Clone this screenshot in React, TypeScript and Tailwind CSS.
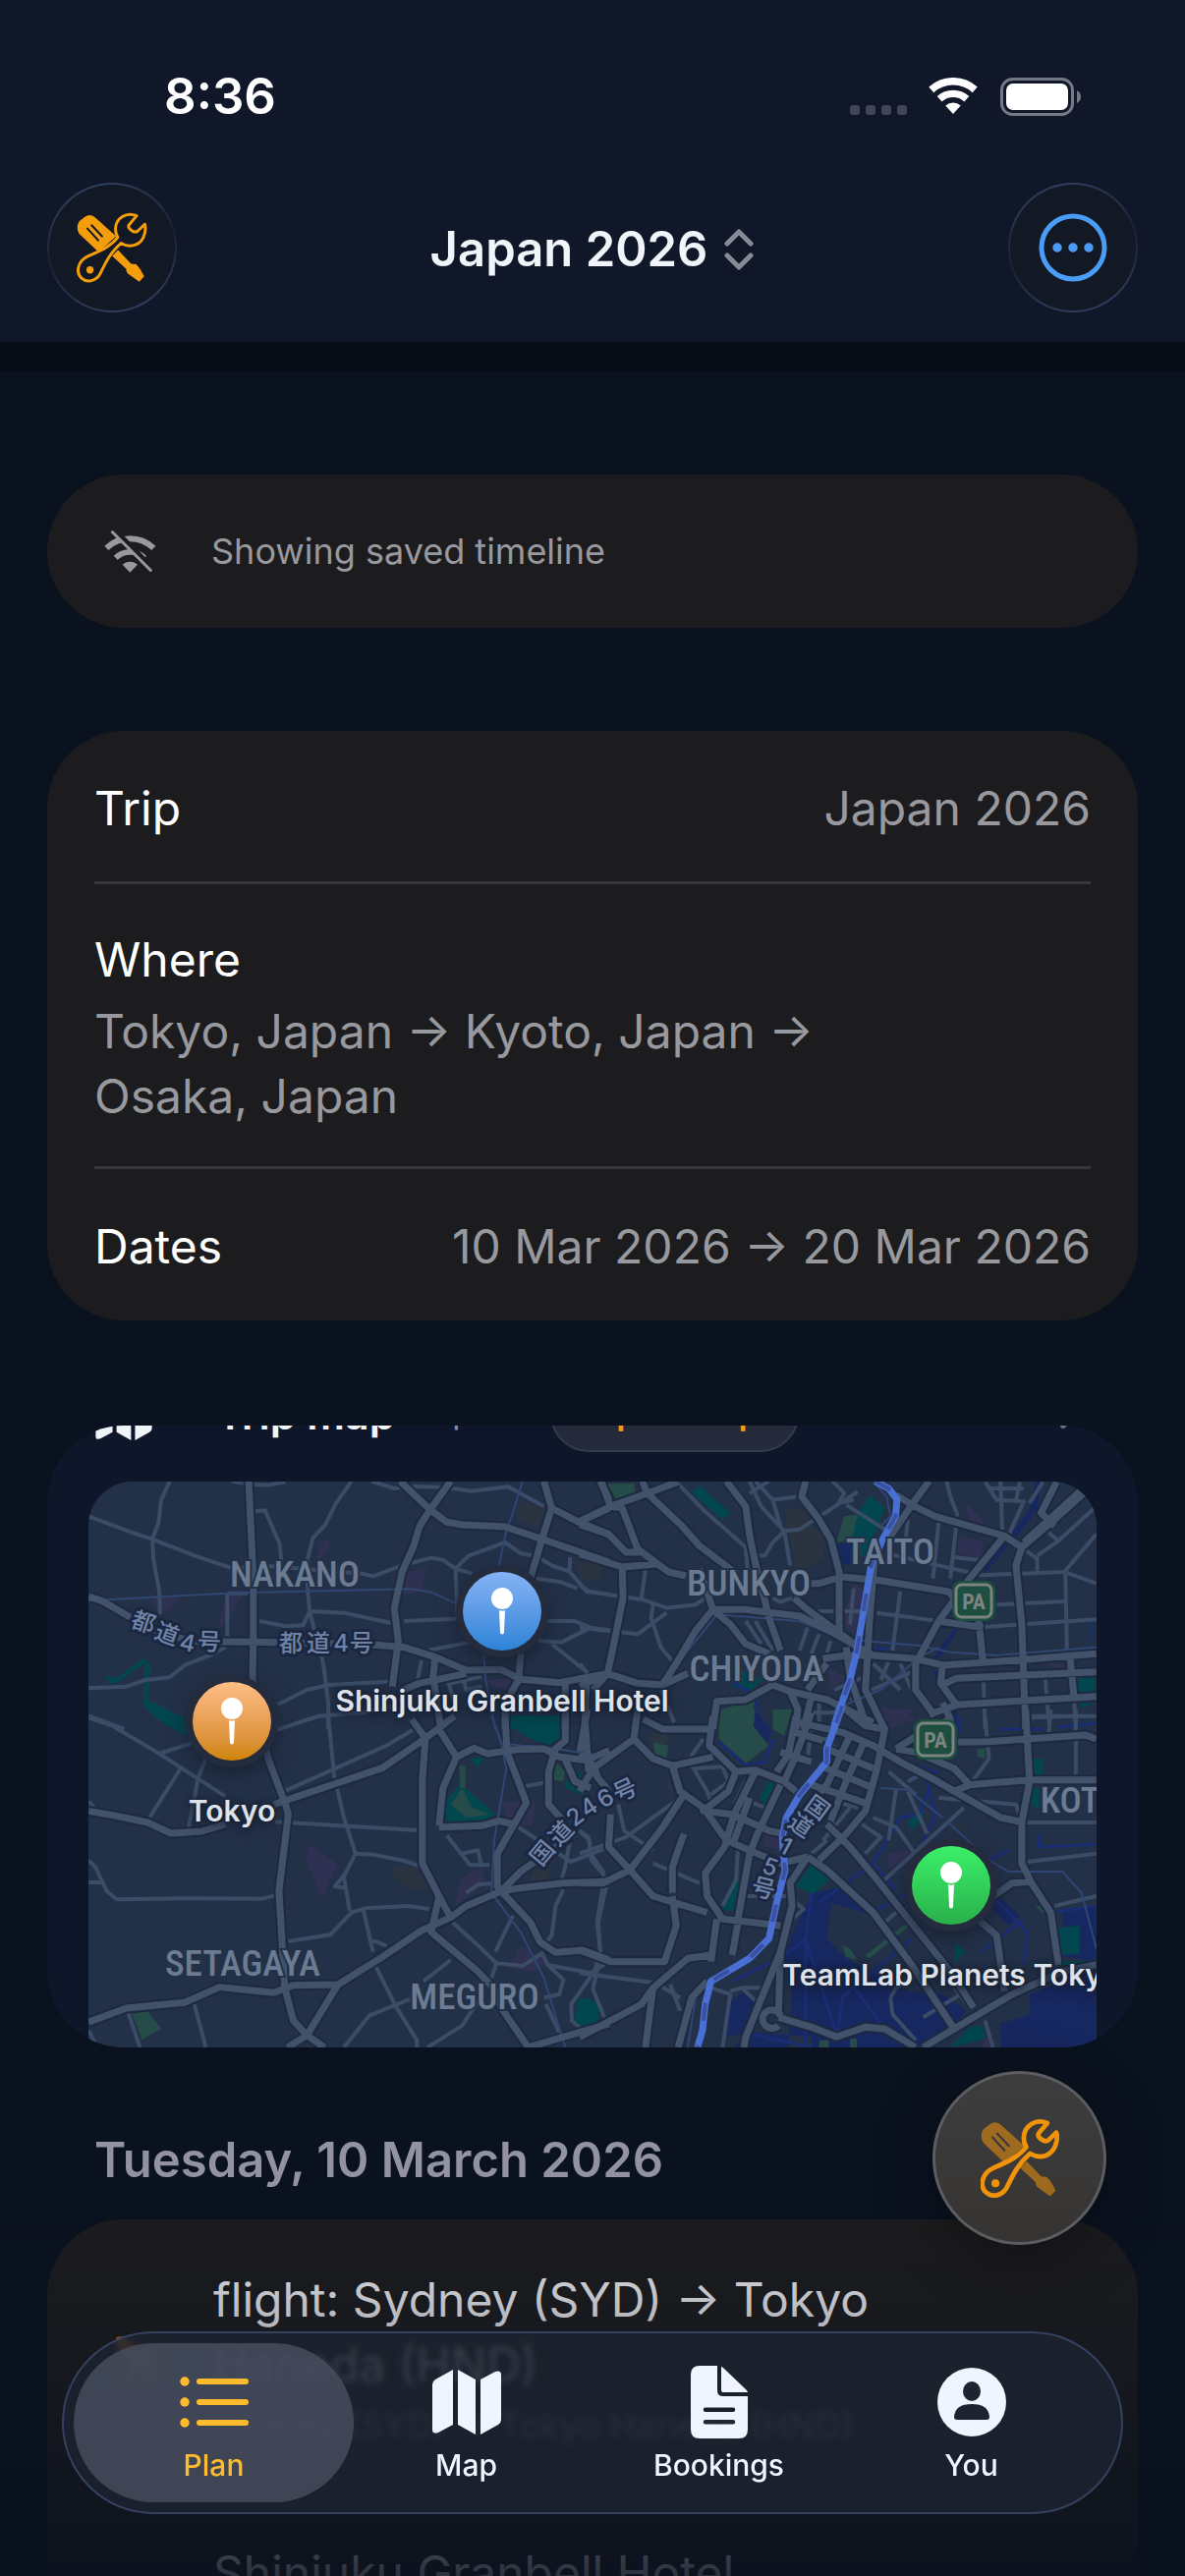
import React from 'react';
import { Plane } from 'lucide-react';

type Tile = {
  origin: string;
  water: string;
  canals: string;
  teal: string;
  green: string;
  purple: string;
  brown: string;
  major: string;
  minor: string;
  rail: string;
  route: string;
};

// Map is split in four tiles, each with its own coordinate space
const tiles: Tile[] = [
  {
    origin: 'translate(-90 -88) scale(0.3954 0.3333)',
    water: '',
    canals: '',
    teal: 'M270 855L300 865L370 803L388 830L380 930L440 965L475 1000V1018L440 1015L400 985L370 950L372 820L300 878L280 880Z M1310 978H1443V1020H1315Z',
    green: 'M435 990L460 990V1015H440Z',
    purple: 'M820 450L850 440L845 470L815 510Z M385 610L460 620L440 650L410 670Z M560 720L580 610L630 600L590 680Z M1010 550L1100 525L1085 600L1040 610Z M1260 870L1340 860L1320 900L1270 890Z',
    brown: 'M1335 320L1415 350L1390 405L1330 380Z M1475 510L1540 510L1550 550L1510 570Z',
    major:
      'M640 263L652 560L652 740L650 870L690 1020 M228 615L262 628L330 675L420 730L500 752L575 753L720 755L960 762L1040 770L1120 800L1200 840L1290 838L1340 868L1440 878L1568 850 M1030 263L1107 350L1150 388L1190 396L1300 402L1395 440L1568 510 M1160 263L1107 350L1080 400L1065 460L1035 540L1015 650L1025 750L1010 890 M1400 263L1420 345L1395 440L1365 560 M1420 345L1490 388L1568 425 M1490 388L1568 345 M1545 263L1568 320 M1120 800L1115 860L1135 1020 M1340 790L1335 870L1300 940L1300 1020 M1455 870V1020 M1510 860L1505 1020 M1040 900L1080 880L1200 850',
    minor:
      'M228 370L340 420L392 440L500 490L600 530L700 523L930 545L960 553L1035 520L1110 497L1140 503L1172 530L1215 545 M1172 530L1205 492L1300 450L1340 483L1380 492L1420 520L1465 538L1510 600L1568 608 M437 263L415 320L408 390L392 440L395 500L410 600L412 670 M595 263L650 273L690 275L735 265 M655 355L682 352L720 455L724 510 M905 263L865 330L838 395L805 437L792 500V600L797 660L780 703L735 706L668 690 M797 660L885 665L1010 697 M797 660L832 820L845 940V1020 M955 263L1015 285L1050 278L1150 282L1212 293L1308 280L1400 340 M1040 690L1175 683 M1400 690L1478 690L1520 710L1568 718 M1520 710L1445 755L1385 750 M1420 760L1515 850 M1172 530L1178 680 M585 605V740 M585 605H650 M228 895L325 890L375 870L437 862L475 825L540 795L580 770 M715 945L790 900L845 885L1000 875 M720 1020L820 980L930 970L1010 950 M228 980L320 1020 M1100 780L1210 755 M1085 810L1075 870 M1380 560L1440 570L1485 590 M1468 495L1465 538 M1150 860L1170 940 M1190 855L1200 900L1240 890 M1160 880L1240 860',
    rail: 'M228 628L585 605L1060 592L1110 602L1172 635 M1345 263L1325 340L1300 430L1285 520 M1245 790L1250 870L1275 1020',
    route: '',
  },
  {
    origin: 'translate(500 -88) scale(0.3929 0.3333)',
    water:
      'M1180 263H1198L1185 350L1130 435L1120 420L1165 350Z M1100 450L1110 460L1050 545L1042 535Z M670 455L705 450L700 520L675 515Z M970 710L985 705L935 800L915 805Z M915 840L930 850L925 885Z M935 900L970 940L990 1020H975L965 960Z',
    canals: 'M455 930L470 1020 M385 870L440 905 M1325 690V750 M760 775H800',
    teal: 'M310 275L390 360L370 380L290 300Z M752 305L790 345L745 490L720 490L700 400Z M395 830L475 870L440 905L395 890Z M1290 860H1335V905H1290Z M1295 940H1335L1300 955Z',
    green: 'M70 270L140 270L145 300L95 320Z M355 1020L365 960L455 925L440 1020Z M685 370L720 365L705 440L665 450Z',
    purple: 'M1000 330L1050 390L1010 400Z M985 430L1045 450L1035 500L975 480Z M710 570L740 600L710 730L680 700Z M780 950L870 990L800 1020Z M640 830L690 860L650 900Z M1200 820H1260L1240 835Z',
    brown: 'M530 345L580 350L600 400L640 430L630 500L560 540L545 440Z M0 510L60 530L45 565L0 560Z',
    major:
      'M0 385L80 340L175 300L255 265 M0 395L75 425L120 480L165 480 M55 263L80 340L110 345L150 470L230 540L275 552 M162 263L175 300L265 400L310 460L405 545 M0 485L110 525L205 515 M110 525L112 620L90 750L72 850L35 900 M0 890L72 850L150 880L215 885L280 850 M380 263L430 340L440 430L460 540L478 620L490 680L520 780 M585 263L575 310L620 380L650 440L672 540V730 M600 575L620 575L680 555L770 565L955 600L970 620 M215 885L260 800L300 720L345 655L430 655L570 675L640 715L700 755L760 795L870 805L940 825L1150 808L1338 790 M345 655L390 700L430 760L490 790 M310 530L345 655 M555 620L590 655L700 750 M905 263L860 335L800 440 M820 305L860 335L920 370L1100 430L1145 465L1230 380L1338 265 M1100 430L1010 560L930 690L870 820V900L920 980 M1145 465L1130 520L1145 700L1155 1020 M1030 650L1045 820 M930 690L1045 710 M765 480L750 700L740 900L790 1020 M940 885L975 865L1338 845 M905 975L980 945L1338 920 M940 825L935 880L975 945 M1235 265L1195 360L1230 400 M1300 290L1150 450 M1270 800L1280 920 M630 805L690 795L760 795 M690 770L700 860L740 1000 M345 1020L355 935L430 930L500 885L545 905L565 960L560 1020 M545 905L640 930L760 1000 M600 920L580 1020 M640 820L590 900',
    minor:
      'M0 580L25 600L90 612L165 625L225 650L300 640L325 620 M170 535L160 620 M190 640L185 680L210 770L245 820 M0 710L75 720L150 730L225 665 M250 265L320 350L430 465L435 540 M440 263L470 340L530 415L545 520 M530 415L500 450L480 490H460 M530 415L570 410L720 295 M490 263L440 300 M500 320L565 310 M655 263L685 300L670 330L710 320 M690 335L790 410 M455 263L500 320L520 400 M950 263L960 310L980 370 M930 385L915 560 M975 400L960 560 M850 380L840 480 M1050 265L1080 320L1150 325L1110 430 M1140 265L1130 325 M1200 265L1165 330 M1090 263L1095 430 M1060 285H1150 M800 485L910 515L1040 550L1140 545L1255 540L1338 575 M970 495L1040 505 M1255 540L1338 425 M1145 465L1185 500V540 M1215 420L1240 445L1185 490 M1338 340L1240 445 M1080 640L1258 630 M1050 708L1338 685 M1258 545L1262 780 M770 665L930 690 M610 660L750 660 M830 600L810 780 M710 590L700 700 M500 620L520 632L550 620 M430 690L470 760 M455 690L500 780 M590 710L570 780 M620 730L600 790 M650 750L640 790 M760 820L830 900 M800 815L780 870 M830 820L860 900 M700 930L870 840 M660 900L740 860 M1205 850L1215 1000 M1045 850L1050 1020 M1170 985L1280 980 M1280 920L1285 1020 M600 970H680 M620 940V1010 M210 900L245 1000 M0 820L20 850',
    rail: 'M200 890L260 810L355 670L570 690L680 745L880 765L960 785L1080 795L1338 770 M760 263L795 310L805 370L780 400 M660 960L780 900L880 800L930 770',
    route: 'M765 263L800 285L822 318L818 370L785 440L755 520L735 660L718 780L700 870L670 970L655 1024',
  },
  {
    origin: 'translate(-90 232) scale(0.3954 0.3333)',
    water: '',
    canals: '',
    teal: 'M1308 20H1445V85L1410 110L1360 85L1325 60Z M1150 350L1145 280L1180 235L1190 172L1198 240L1275 320L1240 350Z M1210 150L1250 145L1230 178Z M1490 880L1540 895V960L1500 978L1478 950Z M1470 155L1500 215V260L1455 240Z M385 0L470 20L490 85L460 70L410 30Z',
    green: 'M1160 290L1190 240L1215 300L1260 320L1200 330Z M340 930L380 922L415 975L365 1008Z M1430 160L1455 190L1450 220L1425 215Z M1182 172H1198V240H1185Z',
    purple: 'M800 412L868 470L830 578L785 450Z M1185 515L1240 480L1250 530L1170 600Z M1290 280L1380 285L1370 355L1310 340Z M1340 720L1410 770L1370 800L1310 790Z',
    brown: 'M1010 480L1070 480L1105 550L1050 545L1010 510Z M1370 490L1410 490V535H1365Z',
    major:
      'M650 -90L690 150L735 290L742 320L718 555L733 850L755 950L790 995L835 1032 M740 1032L790 995L870 840L755 842L705 865L565 848L475 895L325 912L228 955 M870 840L985 755L1085 675L1160 635L1200 600L1290 555L1340 545L1450 530L1568 525 M705 290L860 228L985 178L1095 88L1170 20 M1060 30L1095 88L1087 215V470L1130 570L1160 635 M1130 570L1110 680L1150 720L1230 800L1270 850L1295 920L1360 1032L1450 1000L1568 960 M1300 20L1305 130L1355 285L1280 440V540L1290 555L1365 650L1390 710L1430 742L1500 735L1568 765 M1130 360L1240 355L1285 340L1320 350 M1290 555L1340 495L1480 380 M1130 60L1175 145L1220 118L1255 135L1330 122L1400 120L1440 145L1510 155L1568 125 M1510 155L1540 210L1568 250 M1455 20V95L1430 120L1412 190V290L1450 340 M1505 20L1515 190 M1175 145L1140 240L1130 355 M228 310L300 325L380 345L440 378L520 372L580 350 M1450 140L1480 220L1520 240',
    minor:
      'M228 25L290 50L410 135L580 265 M410 135L500 100 M530 150L510 210L485 365 M465 180L385 330 M713 62L820 20 M735 248L995 110L1065 60 M845 20L860 200L885 330L915 440L960 443L1040 462L1085 480 M708 343L1087 370 M915 440L885 510L900 615 M890 545L862 540L890 500 M228 460L245 480L275 555L300 580L470 577L675 578L708 568 M228 528H262 M742 708L850 688L905 620L940 607L1050 600L1105 610 M935 610L960 740 M960 705L995 722 M965 780L1018 905L1073 1010V1032 M885 1032L950 935L1055 885 M1100 1032L1190 965L1230 890 M1090 830L1160 765 M330 925L360 1032 M500 900L530 1032 M228 980L245 1020 M1165 650L1230 720L1278 775L1345 783L1395 745L1410 780L1520 805L1568 770 M1275 740L1320 630 M1278 775L1265 820 M1410 780L1450 825L1440 870L1400 880 M1405 900L1445 1000 M1560 540L1540 650L1545 740L1530 800L1470 900L1472 950L1505 985 M1525 850L1555 940 M1450 550L1430 600L1420 690L1400 720 M1470 380L1455 480L1440 540 M1490 370L1515 390L1520 440L1555 500 M1150 385L1210 475L1260 475 M1335 360L1470 465L1568 420 M228 280L250 310 M1190 440L1230 430L1240 480 M1200 560L1230 535L1280 530 M1350 235L1410 222',
    rail: 'M1265 20L1290 100L1303 180L1272 400L1265 560L1340 680L1400 820L1455 1032 M1290 105L1400 115L1568 145',
    route: '',
  },
  {
    origin: 'translate(500 232) scale(0.3929 0.3333)',
    water:
      'M540 1032L550 860L530 770L545 700L600 560L700 540L740 620L650 590L640 700L690 760L850 860L940 870L1000 920L960 980L870 1032Z M600 1000L440 985L400 1032H600Z M1090 960L1165 930V870L1338 790V1032H1090Z M1250 610L1338 600V790L1300 760L1250 755Z M380 900L430 860L460 890L420 990L370 1000Z M455 0L500 70L480 110L450 60Z M1060 540L1140 630L1110 660L1060 600Z',
    canals:
      'M885 180L905 240L880 320L830 330L760 470L620 590 M905 240L920 330L890 400 M760 470L820 550 M980 20L985 70 M820 150L920 190L890 200 M1150 640L1040 740 M1060 560L1160 680L1150 780 M1220 620L1338 600 M1190 380V420L1338 412 M1060 460L1110 430 M360 100L430 170L480 160L500 90 M585 700V1032 M585 700L668 1000 M585 700L520 760 M715 855L780 960 M860 700L680 880L668 1000 M600 560L585 700 M395 830L500 770 M440 990L600 1032 M760 620L850 560 M1090 60H1200 M1240 55L1338 42',
    teal: 'M600 470L645 520L605 565L560 540Z M490 220L520 235L480 290L465 270Z M400 510H415L400 615L365 610Z M0 885L25 880L45 930L35 970L0 975Z M1175 150H1200V205H1180Z M1170 240H1190V305L1170 290Z M1240 665L1295 660V745L1245 750Z M1010 970L1045 965L1050 1005L960 1032Z M975 710L1000 740L970 775Z M0 190L8 220L0 240Z M850 340L890 300V330L860 370Z M1170 775L1338 765V775L1180 785Z',
    green: 'M365 0H455L450 50L490 110L430 165L360 90Z M500 0H550L530 80L500 60Z M680 720L700 730L718 765L690 755Z M190 100L230 110L225 150L195 140Z M1180 600L1205 600L1200 625Z M700 1005h18v27h-18Z M740 750L850 650L850 665L750 760Z M1030 120L1050 120V150L1030 145Z M510 180L545 170L535 200Z M620 1010H645V1032H620Z',
    purple: 'M480 380L530 390L520 430L480 420Z M800 440L850 430L860 440L800 490Z M770 0H870L830 40Z M225 210L250 260L230 240Z M1050 1000L1075 1005V1032H1040Z',
    brown: 'M185 70L230 80L225 110L180 100Z M960 345L1000 350L1000 375Z',
    major:
      'M20 0L0 130 M150 0L140 90L35 180L20 210L0 250 M0 135L35 170L45 200 M140 90L190 150L240 172L345 145 M165 30L215 60H335 M345 20L335 110L375 155L405 190 M240 172L260 250L320 300L380 400L520 470L590 450 M405 190L385 250L320 310L395 320L490 370L530 380 M405 190L455 185L530 220L560 250 M455 190L400 320L375 420L325 500L330 570L370 640L520 660 M520 230L460 380L440 440L410 640 M560 20L540 140L510 190 M600 10L560 140L530 220 M520 130L600 160 M570 40L680 70L760 110L830 160L920 215L970 250L1090 330L1150 345 M640 120L760 180 M620 170L760 240 M600 230L750 290 M700 80L640 230L610 270 M740 90L690 220L650 340 M690 0L740 50L790 60L770 180L740 310L690 380L620 460 M640 350L700 420L770 520L960 800L1020 910 M590 450L640 490L760 620L860 780L970 975 M590 450L545 530L550 600L520 740L515 920 M520 740L430 1000L425 1032 M890 1032L970 975L1120 870L1250 800L1338 780 M515 940L600 970L665 1000L740 970L790 975L870 1032 M520 935a24 28 0 1 0 -5 30 M820 120L900 60L960 30L940 -20 M820 120L870 130L970 180L1010 230L970 250 M1010 230L1165 215L1338 215 M1155 0L1165 220L1145 345V470L1170 530L1220 620L1240 780 M980 100L1060 98L1310 78L1338 90 M1170 525L1120 530L1010 620L1080 690L1100 860 M0 1000L160 900L190 850L280 760L340 750 M0 735L80 770L220 770L250 660L240 570 M0 530L60 530L130 490L190 570L330 620 M80 320L75 420L130 490L215 360L270 260 M170 1032L190 850 M255 1032L290 880L330 830 M355 640L340 770 M410 650L395 750 M270 380L240 480V560 M560 70L630 95 M440 270L400 400',
    minor:
      'M290 170L330 250L345 300 M300 180L370 175L385 220L340 260 M100 290L115 370L190 430 M0 440L120 390L260 270 M0 370L25 400L30 460L65 510 M60 540L45 650L55 760 M190 470L310 530 M410 420L405 520L370 600 M0 805L195 835L260 880 M50 770L35 850 M235 840L260 920 M340 850L390 870L370 1032 M390 860L420 850H470 M420 850L455 890 M430 570H540 M550 580L580 610L530 660 M1050 20L1060 150L1020 215 M1170 20H1338 M1220 0L1215 75 M1285 0V200 M1155 345H1338 M1160 465L1338 440 M1230 600L1338 570 M995 300L790 520 M760 330L820 360L865 435 M800 190L870 260 M930 270L1130 290L1145 340 M850 220L880 200 M730 350L780 390L740 440 M820 240L800 400 M890 940L1000 860 M970 850L1010 910 M805 880L820 850L900 790 M805 880L810 930L870 1010 M1050 950L1070 1032 M850 250L900 380 M790 650L830 610 M600 60L590 150 M580 90H640 M660 110L620 200 M720 120L680 240 M670 290L650 370 M700 300L630 400 M430 220L400 290 M440 280L500 310 M420 340L410 400 M660 280L720 300 M640 400L600 440 M290 180V140L320 90',
    rail: 'M780 240L850 245L940 330 M950 340L1060 460L1110 495H1250L1300 560L1338 730 M300 880L280 1032',
    route: 'M680 -10L640 120V160L570 260L535 330L525 390L528 455L532 490L510 590L490 700L440 760L340 830L325 900L318 980L305 1032',
  },
];

const districts = [
  { name: 'NAKANO', x: 210, y: 107 },
  { name: 'BUNKYO', x: 672, y: 116 },
  { name: 'TAITO', x: 816, y: 84 },
  { name: 'CHIYODA', x: 680, y: 203 },
  { name: 'KOTO', x: 1010, y: 337 },
  { name: 'SETAGAYA', x: 157, y: 503 },
  { name: 'MEGURO', x: 393, y: 537 },
];

// [glyph, x, y, rotation]
const roadLabels: [string, number, number, number][] = [
  ['都', 56, 143, 18],
  ['道', 80, 155, 20],
  ['4', 101, 164, 12],
  ['号', 123, 163, 3],
  ['都', 206, 164, 0],
  ['道', 234, 164, 0],
  ['4', 257, 164, 0],
  ['号', 278, 164, 0],
  ['国', 462, 378, -50],
  ['道', 481, 358, -46],
  ['2', 495, 341, -38],
  ['4', 509, 331, -34],
  ['6', 526, 322, -30],
  ['号', 546, 314, -25],
  ['国', 742, 332, 36],
  ['道', 725, 350, 34],
  ['1', 710, 371, 28],
  ['5', 694, 392, 20],
  ['号', 687, 414, 14],
];

const rest = { vectorEffect: 'non-scaling-stroke' as const };

function TokyoMap() {
  return (
    <svg
      viewBox="0 0 1026 576"
      preserveAspectRatio="xMidYMid slice"
      className="absolute inset-0 h-full w-full"
      aria-hidden="true"
    >
      <rect width="1026" height="576" fill="#233148" />
      {tiles.map((t) => (
        <g key={t.origin} transform={t.origin}>
          <path d={t.water} fill="#17275f" />
          <path d={t.brown} fill="#2a3340" />
          <path d={t.purple} fill="#2f3152" />
          <path d={t.teal} fill="#02474f" />
          <path d={t.green} fill="#254c48" />
          <path d={t.canals} fill="none" stroke="#1a2d72" strokeWidth="3" {...rest} />
        </g>
      ))}
      <g fill="none" strokeLinejoin="round">
        {tiles.map((t) => (
          <g key={t.origin} transform={t.origin}>
            <path d={t.minor} stroke="#3b4c66" strokeWidth="4" {...rest} />
            <path d={t.major} stroke="#1d293f" strokeWidth="11" {...rest} />
            <path d={t.rail} stroke="#304672" strokeWidth="2" {...rest} />
          </g>
        ))}
        {tiles.map((t) => (
          <g key={t.origin} transform={t.origin}>
            <path d={t.major} stroke="#42526a" strokeWidth="7" {...rest} />
            <path d={t.route} stroke="#4a6fd4" strokeWidth="7" {...rest} />
            <path d={t.route} stroke="#3a51a0" strokeWidth="4" strokeDasharray="18 26" {...rest} />
          </g>
        ))}
      </g>

      <g
        fill="#6b7b92"
        stroke="#233148"
        strokeWidth="4"
        paintOrder="stroke"
        className="font-['Roboto_Condensed','Liberation_Sans_Narrow','Roboto',sans-serif] text-[37px] font-medium"
      >
        {districts.map((d) => (
          <text key={d.name} x={d.x} y={d.y} textAnchor="middle">
            {d.name}
          </text>
        ))}
      </g>
      <g
        fill="#6f83a6"
        stroke="#1b2640"
        strokeWidth="6"
        strokeLinejoin="round"
        paintOrder="stroke"
        className="font-['Inter','Noto_Sans_CJK_JP',sans-serif] text-[24px] font-medium"
      >
        {roadLabels.map(([glyph, x, y, r]) => (
          <text key={`${x}-${y}`} x={x} y={y} textAnchor="middle" dominantBaseline="central" transform={`rotate(${r} ${x} ${y})`}>
            {glyph}
          </text>
        ))}
      </g>
      {[
        [901, 121],
        [862, 262],
      ].map(([x, y]) => (
        <g key={x}>
          <rect x={x - 22} y={y - 20} width="44" height="41" rx="9" fill="#1c4f40" />
          <rect x={x - 18} y={y - 16} width="36" height="33" rx="6" fill="#1c4f40" stroke="#7d8380" strokeWidth="3" />
          <text x={x} y={y + 9} textAnchor="middle" fill="#7d8380" className="font-['Roboto_Condensed','Liberation_Sans_Narrow','Roboto',sans-serif] text-[22px] font-bold">
            PA
          </text>
        </g>
      ))}
    </svg>
  );
}

function ToolsIcon({ className, backdrop, faded }: { className: string; backdrop: string; faded?: boolean }) {
  return (
    <svg viewBox="25 28 217 217" className={className} aria-hidden="true">
      <g fill="currentColor" opacity={faded ? 0.55 : 1}>
        <path d="M33 56L50 42Q68 30 84 46L146 102L92 150L33 94Q21 74 33 56Z" />
        <path d="M134 162L152 144L192 186L208 188Q222 202 232 225L217 241L182 216Q176 208 177 202Z" />
        <path d="M58 78L91 114M71 68L103 102" stroke={backdrop} strokeWidth="6" strokeLinecap="round" />
      </g>
      <path
        d="M209 39C178 26 145 45 144 80C144 92 147 98 151 105C130 132 100 146 62 162C26 178 22 214 40 230C60 248 88 236 98 215C115 180 130 150 161 123C190 140 226 130 234 92C237 80 236 72 234 65L212 86C202 94 180 78 185 68C188 62 192 60 209 39Z"
        fill={backdrop}
        stroke="currentColor"
        strokeWidth={faded ? 13 : 9}
        strokeLinejoin="round"
      />
      <circle cx="66" cy="205" r="11" fill="currentColor" />
    </svg>
  );
}

function WifiIcon() {
  return (
    <svg viewBox="0 0 50 38" className="h-[38px] w-[50px]" fill="none" stroke="#fff" aria-hidden="true">
      <path d="M2.8 12.3A33.2 33.2 0 0 1 47.2 12.3" strokeWidth="7.6" />
      <path d="M11.2 21.7A20.6 20.6 0 0 1 38.8 21.7" strokeWidth="7.4" />
      <path d="M17.3 28.5A11.5 11.5 0 0 1 32.7 28.5L25 37Z" fill="#fff" stroke="none" />
    </svg>
  );
}

function WifiOffIcon() {
  return (
    <svg viewBox="20 24 162 134" className="h-[45px] w-[54px] text-[#98989f]" fill="none" stroke="currentColor" aria-hidden="true">
      <path d="M30 80A104 104 0 0 1 174 80" strokeWidth="18" />
      <path d="M58 110A63 63 0 0 1 146 110" strokeWidth="17" />
      <path d="M79 131A33 33 0 0 1 125 131L102 155Z" fill="currentColor" stroke="none" />
      <path d="M56 25L172 142" stroke="#1c1c1e" strokeWidth="14" />
      <path d="M48 31L165 148" strokeWidth="9" strokeLinecap="round" />
    </svg>
  );
}

function MapIcon({ className }: { className: string }) {
  return (
    <svg viewBox="0 0 70 66" className={className} fill="currentColor" aria-hidden="true">
      <path d="M0 15Q0 12 3 10L21 0V56L6 64Q0 66 0 61Z" />
      <path d="M26 0L44 10V66L26 56Z" />
      <path d="M49 10L64 2Q70 0 70 5V51Q70 54 67 56L49 66Z" />
    </svg>
  );
}

function PlanIcon() {
  return (
    <svg viewBox="0 0 70 52" className="h-[52px] w-[70px]" fill="currentColor" aria-hidden="true">
      {[5, 26, 47].map((y) => (
        <g key={y}>
          <circle cx="5" cy={y} r="4.7" />
          <rect x="17" y={y - 3} width="53" height="6" rx="3" />
        </g>
      ))}
    </svg>
  );
}

function BookingsIcon() {
  return (
    <svg viewBox="0 0 58 74" className="h-[74px] w-[58px]" fill="currentColor" aria-hidden="true">
      <path
        fillRule="evenodd"
        d="M9 0H27V25Q27 31 33 31H58V65Q58 74 49 74H9Q0 74 0 65V9Q0 0 9 0Z M15 42.500a2.200 2.200 0 0 0 0 4.500H43a2.200 2.200 0 0 0 0 -4.500Z M15 55a2.200 2.200 0 0 0 0 4.500H43a2.200 2.200 0 0 0 0 -4.500Z"
      />
      <path d="M31 1Q32 1 34 3L56 24Q58 26 58 27H33Q31 27 31 25Z" />
    </svg>
  );
}

function YouIcon() {
  return (
    <svg viewBox="0 0 70 70" className="h-[70px] w-[70px]" fill="currentColor" aria-hidden="true">
      <circle cx="35" cy="35" r="35" />
      <ellipse cx="35" cy="24" rx="9" ry="10" fill="#1d2331" />
      <path d="M17 50Q18 37 35 37T53 50Q53 53 50 53H20Q17 53 17 50Z" fill="#1d2331" />
    </svg>
  );
}

function StatusBar() {
  return (
    <div className="flex items-start justify-between pt-[66px] pl-[167px] pr-[106px]">
      <span className="text-[51px] leading-[64px] font-semibold text-white">8:36</span>
      <div className="flex h-[64px] items-center">
        <div className="mt-7 mr-[22px] flex gap-[6px]">
          {[0, 1, 2, 3].map((i) => (
            <span key={i} className="size-[10px] rounded-[3px] bg-[#414657]" />
          ))}
        </div>
        <WifiIcon />
        <svg viewBox="0 0 82 39" className="ml-[23px] h-[39px] w-[82px]" aria-hidden="true">
          <rect x="1.500" y="1.500" width="72" height="36" rx="11" fill="none" stroke="#747985" strokeWidth="3" />
          <rect x="6" y="6" width="63" height="27" rx="7" fill="#fff" />
          <path d="M78 13Q82 15 82 19.500T78 26Z" fill="#747985" />
        </svg>
      </div>
    </div>
  );
}

function RoundButton({ label, children }: { label: string; children: React.ReactNode }) {
  return (
    <button
      aria-label={label}
      className="flex size-[132px] items-center justify-center rounded-full bg-linear-165 from-[#35456a] via-[#1a2231] to-[#35456a] p-[2px]"
    >
      <span className="flex size-full items-center justify-center rounded-full bg-[#131924]">{children}</span>
    </button>
  );
}

function NavBar() {
  return (
    <div className="flex items-center justify-between px-12 pt-14 pb-[30px]">
      <RoundButton label="Trip tools">
        <ToolsIcon className="size-[72px] text-[#f59e0b]" backdrop="#131924" />
      </RoundButton>
      <button className="flex items-center gap-4 pt-[3px] text-[49px] leading-[64px] font-semibold text-[#f1f5f9]">
        Japan 2026
        <svg viewBox="0 0 32 44" className="h-[44px] w-[32px]" fill="none" stroke="#868b95" strokeWidth="5" strokeLinecap="round" strokeLinejoin="round" aria-hidden="true">
          <path d="M4 16L16 4L28 16M4 28L16 40L28 28" />
        </svg>
      </button>
      <RoundButton label="More">
        <svg viewBox="0 0 70 70" className="size-[70px]" fill="#4a9df6" aria-hidden="true">
          <circle cx="35" cy="35" r="32" fill="none" stroke="#4a9df6" strokeWidth="5" />
          <circle cx="19" cy="35" r="4.700" />
          <circle cx="35" cy="35" r="4.700" />
          <circle cx="51" cy="35" r="4.700" />
        </svg>
      </RoundButton>
    </div>
  );
}

function TripDetails() {
  return (
    <dl className="mt-[105px] rounded-[78px] bg-[#1c1c1e] px-12 text-[48px] leading-[66px]">
      <div className="flex h-[156px] items-center justify-between border-b-3 border-[#38383a] pt-1">
        <dt className="text-white">Trip</dt>
        <dd className="text-[#98989f]">Japan 2026</dd>
      </div>
      <div className="h-[290px] border-b-3 border-[#38383a] pt-11">
        <dt className="text-white">Where</dt>
        <dd className="mt-[7px] max-w-[760px] text-[#98989f]">Tokyo, Japan → Kyoto, Japan → Osaka, Japan</dd>
      </div>
      <div className="flex h-[154px] items-center justify-between pt-1">
        <dt className="text-white">Dates</dt>
        <dd className="text-[#98989f]">10 Mar 2026 → 20 Mar 2026</dd>
      </div>
    </dl>
  );
}

const pins = [
  { name: 'Shinjuku Granbell Hotel', place: 'left-[421px] top-[85px]', fill: 'from-[#85b3f5] to-[#2b83d6]' },
  { name: 'Tokyo', place: 'left-[146px] top-[197px]', fill: 'from-[#ffbd85] to-[#d08400]' },
  { name: 'TeamLab Planets Tokyo', place: 'left-[878px] top-[364px]', fill: 'from-[#3af069] to-[#2ab04b]' },
];

function MapPin({ name, place, fill }: (typeof pins)[number]) {
  return (
    <button className={`absolute flex w-0 flex-col items-center ${place}`}>
      <span className="flex size-[94px] shrink-0 rounded-full bg-[#242b3c] p-[7px] shadow-[0_8px_20px_rgba(20,28,45,0.7)]">
        <span className={`flex size-[80px] items-center justify-center rounded-full bg-linear-to-b ${fill}`}>
          <svg viewBox="0 0 22 48" className="h-[48px] w-[22px]" fill="#fff" aria-hidden="true">
            <circle cx="11" cy="11" r="11" />
            <path d="M8 23Q11 24 14 23L13 46Q11 49 9 46Z" />
          </svg>
        </span>
      </span>
      <span className="mt-6 text-[30px] leading-[40px] font-semibold whitespace-nowrap text-[#dde2ea] [text-shadow:0_0_4px_#1a2233,0_0_6px_#1a2233,0_4px_12px_#1a2233]">
        {name}
      </span>
    </button>
  );
}

function TripMap() {
  return (
    <section className="mt-[107px] overflow-hidden rounded-[78px] bg-[#0e172a]">
      {/* header row is scrolled halfway under the card edge */}
      <div className="-mt-[81px] flex h-[138px] items-center pr-[60px] pl-12">
        <MapIcon className="h-[54px] w-[60px] text-[#f1f5f9]" />
        <h2 className="ml-[64px] text-[43px] leading-[48px] font-semibold text-[#f1f5f9]">Trip map</h2>
        <span className="ml-[27px] pb-1 text-[34px] leading-[40px] text-[#8592aa]">3 pins</span>
        <button className="ml-[33px] h-[78px] rounded-full border-2 border-[#333c4e] bg-[#242a3a] px-[38px] pb-1 text-[35px] leading-[40px] font-semibold text-[#f59e0b]">
          Open map
        </button>
        <svg viewBox="0 0 20 32" className="ml-auto h-[32px] w-[20px]" fill="none" stroke="#6d7381" strokeWidth="6" strokeLinecap="round" aria-hidden="true">
          <path d="M4 4L16 16L4 28" />
        </svg>
      </div>
      <div className="relative mx-[42px] h-[576px] overflow-hidden rounded-t-[45px]">
        <TokyoMap />
        {pins.map((p) => (
          <MapPin key={p.name} {...p} />
        ))}
      </div>
    </section>
  );
}

function DayTimeline() {
  return (
    <section>
      <h2 className="mt-[82px] pl-12 text-[49px] leading-[66px] font-semibold text-[#9292a0]">Tuesday, 10 March 2026</h2>
      <ul className="mt-[27px] rounded-[78px] bg-[#1c1c1e] pt-[49px] pr-12 pb-24 pl-[169px] text-[48px] leading-[66px] text-[#ececf0]">
        <li className="relative">
          <Plane className="absolute top-[66px] -left-[104px] size-[58px] -rotate-90 fill-[#d9701c] text-[#d9701c]" aria-hidden="true" />
          <p className="max-w-[760px]">flight: Sydney (SYD) → Tokyo Haneda (HND)</p>
          <p className="mt-1 text-[36px] leading-[50px] text-[#98989f]">Sydney (SYD) → Tokyo Haneda (HND)</p>
        </li>
        <li className="mt-[92px]">Shinjuku Granbell Hotel</li>
      </ul>
    </section>
  );
}

const tabs = [
  { name: 'Plan', icon: <PlanIcon /> },
  { name: 'Map', icon: <MapIcon className="h-[66px] w-[70px]" /> },
  { name: 'Bookings', icon: <BookingsIcon /> },
  { name: 'You', icon: <YouIcon /> },
];

function TabBar() {
  return (
    <nav className="absolute inset-x-[63px] bottom-[63px] flex h-[186px] rounded-full border-2 border-[#34425f] bg-[#1d2331]/80 px-6 backdrop-blur-[3px]">
      {tabs.map((tab) => {
        const active = tab.name === 'Plan';
        return (
          <button
            key={tab.name}
            aria-current={active ? 'page' : undefined}
            className={`relative flex flex-1 flex-col items-center pt-[31px] ${active ? 'text-[#fdbb2d]' : 'text-[#f0f4ff]'}`}
          >
            {active && <span className="absolute -inset-x-[14px] inset-y-[10px] rounded-full bg-[#4a5060]/80" />}
            <span className="relative flex h-[78px] items-center">{tab.icon}</span>
            <span className="relative mt-[5px] text-[30px] leading-[40px] font-medium">{tab.name}</span>
          </button>
        );
      })}
    </nav>
  );
}

export default function App() {
  return (
    <div className="relative flex h-screen flex-col overflow-hidden bg-[#0b121f] font-['Inter','Noto_Sans_CJK_JP',sans-serif]">
      <header className="shrink-0 bg-[#0f1729]">
        <StatusBar />
        <NavBar />
      </header>
      <div className="h-[30px] shrink-0 bg-[#070c16]" />

      <main className="min-h-0 flex-1 overflow-hidden px-12 pt-[105px]">
        <div className="flex h-[156px] items-center rounded-full bg-[#1c1c1e] pl-[57px] text-[#98989f]">
          <WifiOffIcon />
          <p className="ml-14 text-[36px] leading-[48px]">Showing saved timeline</p>
        </div>
        <TripDetails />
        <TripMap />
        <DayTimeline />
      </main>

      <div className="pointer-events-none absolute inset-x-0 bottom-0 h-[370px] bg-linear-to-b from-[#0a111e]/0 via-[#0a111e]/40 to-[#0a111e]/85" />
      <TabBar />
      <button
        aria-label="Quick tools"
        className="absolute right-[80px] bottom-[337px] flex size-[177px] items-center justify-center rounded-full border-3 border-[#5c5d60] bg-linear-to-b from-[#3d3d3e] to-[#363432] shadow-[0_12px_60px_rgba(0,0,0,0.35)]"
      >
        <ToolsIcon className="size-[80px] text-[#f0930b]" backdrop="#3a3938" faded />
      </button>
    </div>
  );
}
